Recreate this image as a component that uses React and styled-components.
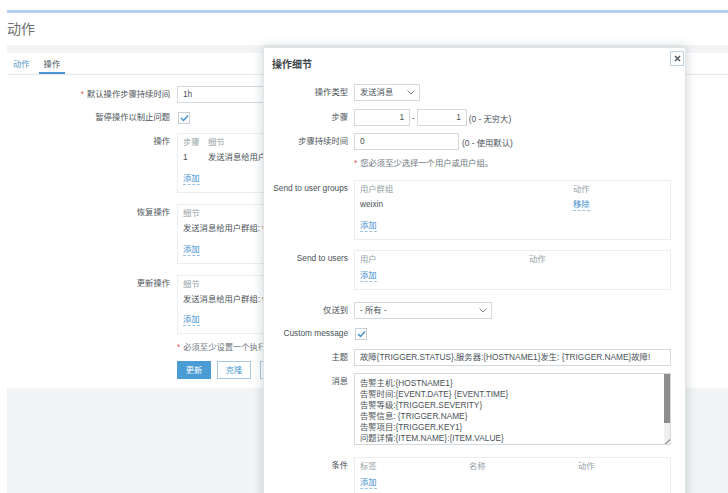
import React from 'react';
import styled, { createGlobalStyle } from 'styled-components';

const GlobalStyle = createGlobalStyle`
  html, body { margin: 0; padding: 0; background: #fff; }
  body {
    font-family: "Liberation Sans", Arial, "Noto Sans CJK SC", sans-serif;
    font-size: 8.3px;
    color: #4a5257;
  }
  * { box-sizing: border-box; }
`;

const Page = styled.div`
  position: relative;
  width: 728px;
  height: 493px;
  overflow: hidden;
  padding-left: 7px;
  display: flex;
  flex-direction: column;
`;

const TopLine = styled.div`
  margin-top: 10px;
  height: 3px;
  background: #b5cff0;
`;

const Title = styled.h1`
  margin: 0;
  height: 32px;
  line-height: 33px;
  font-size: 14px;
  font-weight: normal;
  color: #707070;
`;

const Main = styled.div`
  flex: 1;
  background: #f2f4f6;
  padding-top: 8px;
`;

const Card = styled.div`
  background: #fff;
  height: 335px;
`;

const Tabs = styled.div`
  display: flex;
  gap: 4px;
  padding-left: 1px;
  height: 22px;
  border-bottom: 1px solid #e6e9eb;
`;

const Tab = styled.div`
  padding: 0 5px;
  line-height: 22px;
  color: ${(p) => (p.$active ? '#4a5257' : '#5597cd')};
  box-shadow: ${(p) => (p.$active ? 'inset 0 -2px 0 #4a95d3' : 'none')};
`;

const Form = styled.div`
  padding-top: ${(p) => p.$pt}px;
`;

const Row = styled.div`
  display: grid;
  grid-template-columns: ${(p) => p.$label}px 1fr;
  column-gap: ${(p) => p.$gap}px;
  margin-top: ${(p) => p.$mt || 0}px;
  align-items: start;
`;

const Label = styled.div`
  text-align: right;
  line-height: 17px;
  white-space: nowrap;
  color: #4a5257;
`;

const Req = styled.span`
  color: #e45959;
  margin-right: 3px;
`;

const Field = styled.div`
  display: flex;
  align-items: center;
  gap: ${(p) => p.$gap || 0}px;
  min-height: 17px;
  white-space: nowrap;
`;

const Input = styled.div`
  width: ${(p) => (p.$w ? `${p.$w}px` : '100%')};
  height: 17px;
  line-height: 15px;
  border: 1px solid #d3d9dd;
  padding: 0 5px;
  text-align: ${(p) => (p.$right ? 'right' : 'left')};
  white-space: nowrap;
  overflow: hidden;
  background: #fff;
`;

const Select = styled(Input)`
  display: flex;
  align-items: center;
  justify-content: space-between;
  padding-right: 4px;
`;

const Chevron = () => (
  <svg width="8" height="5" viewBox="0 0 8 5">
    <polyline points="0.5,0.5 4,4 7.5,0.5" fill="none" stroke="#7a858b" strokeWidth="1" />
  </svg>
);

const CheckBox = styled.div`
  width: 12px;
  height: 12px;
  border: 1px solid #c8d0d5;
  background: #fff;
  display: flex;
  align-items: center;
  justify-content: center;
  margin-left: 1px;
`;

const Check = () => (
  <CheckBox>
    <svg width="9" height="8" viewBox="0 0 9 8">
      <polyline points="1,4 3.5,6.5 8,1.5" fill="none" stroke="#3d8fd1" strokeWidth="1.4" />
    </svg>
  </CheckBox>
);

const Note = styled.div`
  line-height: 13px;
  margin-top: ${(p) => p.$mt}px;
  margin-left: ${(p) => p.$ml}px;
  color: #6c777d;
  white-space: nowrap;
`;

const Box = styled.div`
  width: ${(p) => (p.$w ? `${p.$w}px` : '100%')};
  border: 1px solid #ebeef0;
  padding: 1px 5px 7px;
  background: #fff;
`;

const TRow = styled.div`
  display: grid;
  grid-template-columns: ${(p) => p.$cols};
  line-height: 15px;
  color: ${(p) => (p.$head ? '#949fa5' : '#4a5257')};
  white-space: nowrap;
`;

const Link = styled.span`
  color: #3a8ccf;
  border-bottom: 1px dashed #9cc4e6;
  line-height: 11px;
  display: inline-block;
`;

const LinkRow = styled.div`
  margin-top: ${(p) => p.$mt}px;
  line-height: 14px;
`;

const Buttons = styled.div`
  display: flex;
  gap: 6px;
  margin-top: 7px;
  margin-left: 170px;
`;

const Button = styled.div`
  width: 34px;
  height: 18px;
  line-height: 16px;
  text-align: center;
  border: 1px solid ${(p) => (p.$primary ? '#4b9bd4' : '#a9c9e2')};
  background: ${(p) => (p.$primary ? '#4b9bd4' : '#fff')};
  color: ${(p) => (p.$primary ? '#fff' : '#4b9bd4')};
  margin-left: ${(p) => p.$ml || 0}px;
`;

const Modal = styled.div`
  position: absolute;
  left: 263px;
  top: 47px;
  width: 423px;
  height: 470px;
  background: #fff;
  border: 1px solid #dfe4e7;
  box-shadow: 0 0 10px rgba(40, 50, 60, 0.22);
  padding: 9px 14px 0 0;
`;

const ModalTitle = styled.div`
  padding-left: 8px;
  font-size: 10px;
  font-weight: bold;
  line-height: 15px;
  color: #3d4549;
`;

const Close = styled.div`
  position: absolute;
  top: 3px;
  right: 1px;
  width: 14px;
  height: 15px;
  border: 1px solid #b9d2e6;
  display: flex;
  align-items: center;
  justify-content: center;
  background: #fff;
`;

const MessageBox = styled.div`
  display: flex;
  height: 72px;
  border: 1px solid #d3d9dd;
  background: #fff;
`;

const MessageText = styled.div`
  flex: 1;
  padding: 4px 5px 0;
  line-height: 11px;
  white-space: pre;
  overflow: hidden;
`;

const ScrollTrack = styled.div`
  width: 6px;
  background: #f0f0f0;
  display: flex;
  flex-direction: column;
`;

const ScrollThumb = styled.div`
  height: ${(p) => p.$h}px;
  background: #8d8d8d;
`;

const ResizeCorner = styled.div`
  margin-top: auto;
  height: 5px;
  background: linear-gradient(135deg, transparent 50%, #a0a0a0 50%, #a0a0a0 65%, transparent 65%);
`;

const messageLines = [
  '告警主机:{HOSTNAME1}',
  '告警时间:{EVENT.DATE} {EVENT.TIME}',
  '告警等级:{TRIGGER.SEVERITY}',
  '告警信息: {TRIGGER.NAME}',
  '告警项目:{TRIGGER.KEY1}',
  '问题详情:{ITEM.NAME}:{ITEM.VALUE}',
];

function OperationForm() {
  return (
    <Form $pt={11}>
      <Row $label={163} $gap={7}>
        <Label><Req>*</Req>默认操作步骤持续时间</Label>
        <Input $w={130}>1h</Input>
      </Row>
      <Row $label={163} $gap={7} $mt={6}>
        <Label>暂停操作以制止问题</Label>
        <Field><Check /></Field>
      </Row>
      <Row $label={163} $gap={7} $mt={7}>
        <Label>操作</Label>
        <Box $w={220}>
          <TRow $head $cols="25px 1fr"><span>步骤</span><span>细节</span></TRow>
          <TRow $cols="25px 1fr"><span>1</span><span>发送消息给用户群组: weixin</span></TRow>
          <LinkRow $mt={6}><Link>添加</Link></LinkRow>
        </Box>
      </Row>
      <Row $label={163} $gap={7} $mt={11}>
        <Label>恢复操作</Label>
        <Box $w={220}>
          <TRow $head $cols="1fr"><span>细节</span></TRow>
          <TRow $cols="1fr"><span>发送消息给用户群组: weixin</span></TRow>
          <LinkRow $mt={6}><Link>添加</Link></LinkRow>
        </Box>
      </Row>
      <Row $label={163} $gap={7} $mt={11}>
        <Label>更新操作</Label>
        <Box $w={220}>
          <TRow $head $cols="1fr"><span>细节</span></TRow>
          <TRow $cols="1fr"><span>发送消息给用户群组: weixin</span></TRow>
          <LinkRow $mt={5}><Link>添加</Link></LinkRow>
        </Box>
      </Row>
      <Note $mt={7} $ml={170}><Req>*</Req>必须至少设置一个执行内容。</Note>
      <Buttons>
        <Button $primary>更新</Button>
        <Button>克隆</Button>
        <Button $ml={3}>删除</Button>
      </Buttons>
    </Form>
  );
}

function OperationDetails() {
  return (
    <Modal>
      <ModalTitle>操作细节</ModalTitle>
      <Close>
        <svg width="7" height="7" viewBox="0 0 7 7">
          <path d="M1 1L6 6M6 1L1 6" stroke="#555d62" strokeWidth="1.6" />
        </svg>
      </Close>
      <Form $pt={12}>
        <Row $label={84} $gap={6}>
          <Label>操作类型</Label>
          <Select $w={66}><span>发送消息</span><Chevron /></Select>
        </Row>
        <Row $label={84} $gap={6} $mt={8}>
          <Label>步骤</Label>
          <Field $gap={2}>
            <Input $w={56} $right>1</Input>
            <span>-</span>
            <Input $w={50} $right>1</Input>
            <span>(0 - 无穷大)</span>
          </Field>
        </Row>
        <Row $label={84} $gap={6} $mt={7}>
          <Label>步骤持续时间</Label>
          <Field $gap={3}>
            <Input $w={105}>0</Input>
            <span>(0 - 使用默认)</span>
          </Field>
        </Row>
        <Note $mt={7} $ml={90}><Req>*</Req>您必须至少选择一个用户或用户组。</Note>
        <Row $label={84} $gap={6} $mt={10}>
          <Label>Send to user groups</Label>
          <Box>
            <TRow $head $cols="213px 1fr"><span>用户群组</span><span>动作</span></TRow>
            <TRow $cols="213px 1fr"><span>weixin</span><span><Link>移除</Link></span></TRow>
            <LinkRow $mt={6}><Link>添加</Link></LinkRow>
          </Box>
        </Row>
        <Row $label={84} $gap={6} $mt={10}>
          <Label>Send to users</Label>
          <Box>
            <TRow $head $cols="169px 1fr"><span>用户</span><span>动作</span></TRow>
            <LinkRow $mt={1}><Link>添加</Link></LinkRow>
          </Box>
        </Row>
        <Row $label={84} $gap={6} $mt={12}>
          <Label>仅送到</Label>
          <Select $w={138}><span>- 所有 -</span><Chevron /></Select>
        </Row>
        <Row $label={84} $gap={6} $mt={6}>
          <Label>Custom message</Label>
          <Field><Check /></Field>
        </Row>
        <Row $label={84} $gap={6} $mt={7}>
          <Label>主题</Label>
          <Input>故障{'{TRIGGER.STATUS}'},服务器:{'{HOSTNAME1}'}发生: {'{TRIGGER.NAME}'}故障!</Input>
        </Row>
        <Row $label={84} $gap={6} $mt={7}>
          <Label>消息</Label>
          <MessageBox>
            <MessageText>{messageLines.join('\n')}</MessageText>
            <ScrollTrack>
              <ScrollThumb $h={49} />
              <ResizeCorner />
            </ScrollTrack>
          </MessageBox>
        </Row>
        <Row $label={84} $gap={6} $mt={12}>
          <Label>条件</Label>
          <Box>
            <TRow $head $cols="109px 109px 1fr"><span>标签</span><span>名称</span><span>动作</span></TRow>
            <LinkRow $mt={1}><Link>添加</Link></LinkRow>
          </Box>
        </Row>
      </Form>
    </Modal>
  );
}

export default function App() {
  return (
    <>
      <GlobalStyle />
      <Page>
        <TopLine />
        <Title>动作</Title>
        <Main>
          <Card>
            <Tabs>
              <Tab>动作</Tab>
              <Tab $active>操作</Tab>
            </Tabs>
            <OperationForm />
          </Card>
        </Main>
        <OperationDetails />
      </Page>
    </>
  );
}
